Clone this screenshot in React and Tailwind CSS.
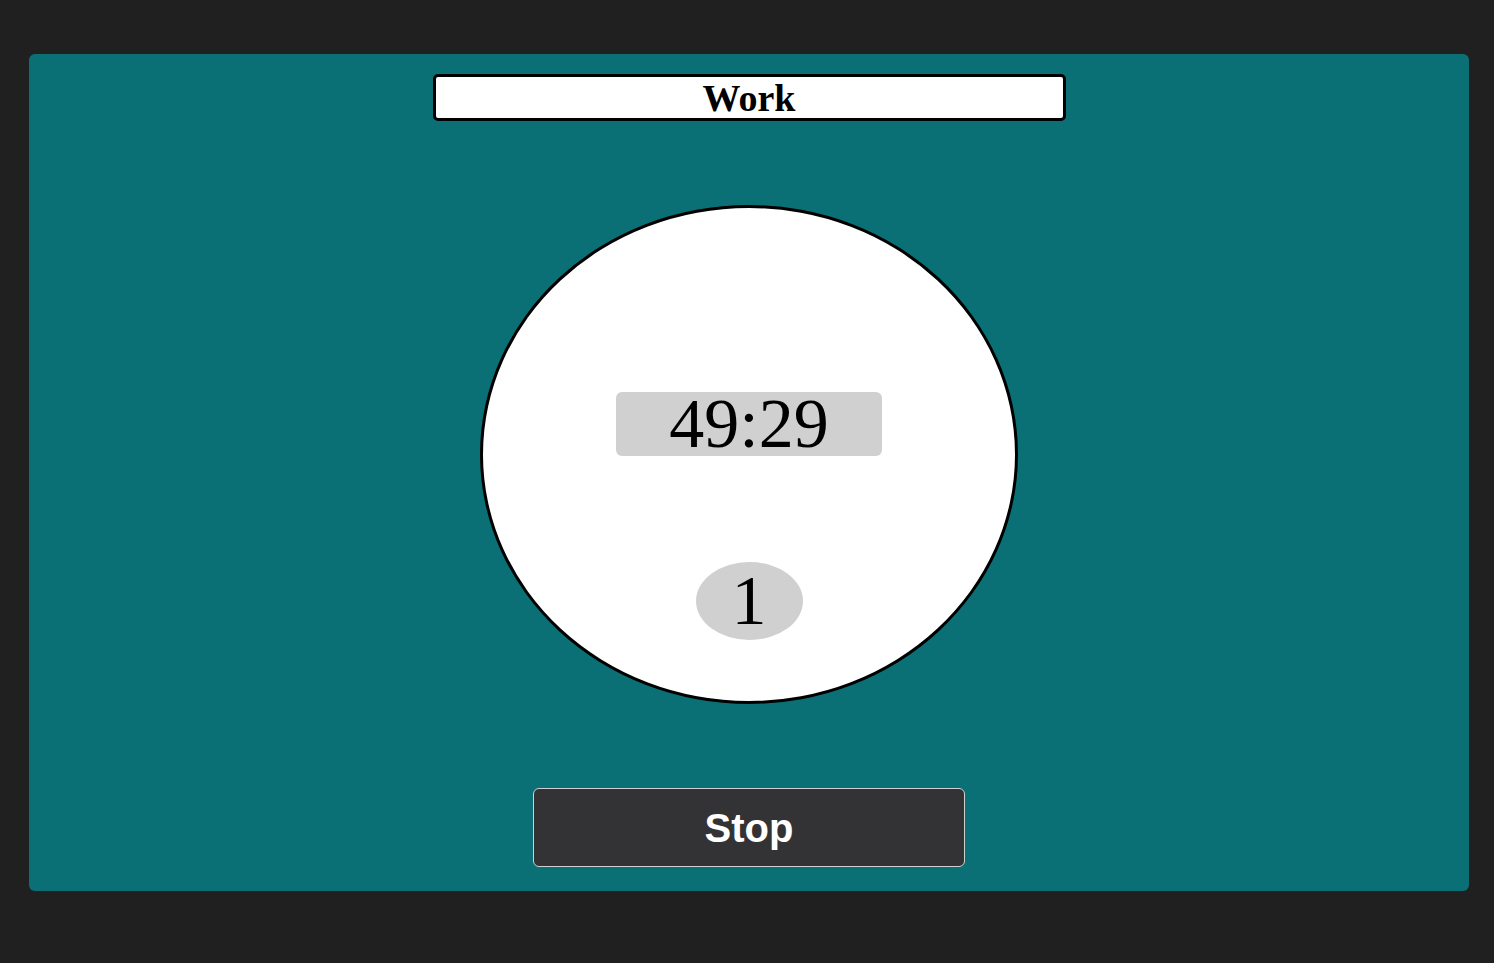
export default function App() {
  return (
    <div className="min-h-screen bg-[#202020] pl-[29px] pr-[25px] pt-[54px] pb-[72px]">
      <div className="h-[837px] rounded-md bg-[#0a7075] flex flex-col items-center pt-[20px]">
        {/* Mode label */}
        <div className="w-[633px] h-[47px] border-[3px] border-black rounded-[5px] bg-white flex items-center justify-center">
          <span className="font-['Liberation_Serif',serif] font-bold text-[38px] leading-none text-black">Work</span>
        </div>

        {/* Timer face */}
        <div className="mt-[84px] w-[538px] h-[499px] rounded-[50%] border-[3px] border-black bg-white flex flex-col items-center pt-[184px]">
          <div className="w-[266px] h-[64px] rounded-md bg-[#d0d0d0] flex items-center justify-center">
            <span className="font-['Liberation_Serif',serif] text-[70px] leading-none text-black">49:29</span>
          </div>
          <div className="mt-[106px] w-[107px] h-[78px] rounded-[50%] bg-[#d0d0d0] flex items-center justify-center">
            <span className="font-['Liberation_Serif',serif] text-[70px] leading-none text-black">1</span>
          </div>
        </div>

        <button className="mt-[84px] w-[432px] h-[79px] rounded-md border border-[#d0d0d0] bg-[#333335] text-white font-['Liberation_Sans',Arial,sans-serif] font-bold text-[40px]">
          Stop
        </button>
      </div>
    </div>
  )
}
